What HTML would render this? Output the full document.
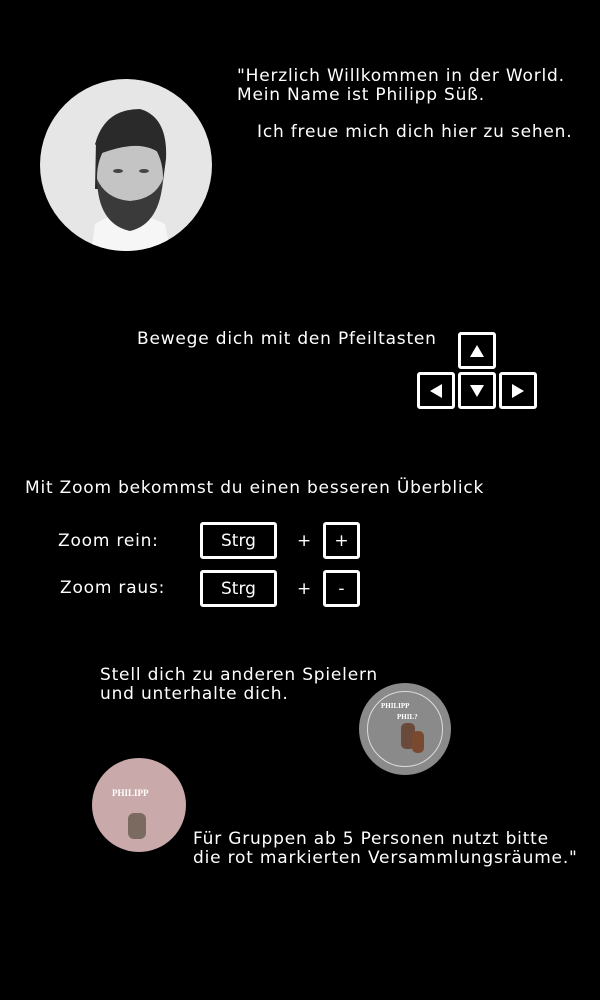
<!DOCTYPE html>
<html><head><meta charset="utf-8"><style>
body{margin:0;width:600px;height:1000px;background:#000;position:relative;overflow:hidden;font-family:"DejaVu Sans","Liberation Sans",sans-serif;color:#fff;font-size:17px;letter-spacing:0.8px}
.t{position:absolute;white-space:nowrap;line-height:19px}
.k{position:absolute;border:3.5px solid #fff;border-radius:3px;box-sizing:border-box;display:flex;align-items:center;justify-content:center;color:#fff;letter-spacing:0}
.c{position:absolute;border-radius:50%;letter-spacing:0}
</style></head><body>
<div class="c" style="left:40px;top:79px;width:172px;height:172px;background:#e6e6e6;overflow:hidden">
<svg width="172" height="172" viewBox="0 0 172 172">
<path d="M45 220 L55 145 Q86 125 125 145 L140 220Z" fill="#f6f6f6"/>
<path d="M56 62 Q66 30 100 30 Q128 38 126 80 L122 110 L55 110 Z" fill="#2a2a2a"/>
<ellipse cx="90" cy="98" rx="33" ry="44" fill="#c4c4c4"/>
<path d="M57 100 Q58 145 90 152 Q120 145 123 100 Q115 120 90 122 Q66 120 57 100Z" fill="#3a3a3a"/>
<path d="M55 65 Q68 32 102 36 Q128 46 124 78 Q105 58 62 74Z" fill="#2a2a2a"/>
<ellipse cx="78" cy="92" rx="5" ry="2" fill="#444"/><ellipse cx="104" cy="92" rx="5" ry="2" fill="#444"/>
</svg></div>
<div class="t" style="left:237px;top:67px">"Herzlich Willkommen in der World.<br>Mein Name ist Philipp Süß.</div>
<div class="t" style="left:257px;top:123px">Ich freue mich dich hier zu sehen.</div>
<div class="t" style="left:137px;top:330px">Bewege dich mit den Pfeiltasten</div>
<div class="k" style="left:458px;top:332px;width:38px;height:37px"><svg width="14" height="12"><path d="M7 0L14 12H0Z" fill="#fff"/></svg></div>
<div class="k" style="left:417px;top:372px;width:38px;height:37px"><svg width="12" height="14"><path d="M0 7L12 0V14Z" fill="#fff"/></svg></div>
<div class="k" style="left:458px;top:372px;width:38px;height:37px"><svg width="14" height="12"><path d="M7 12L14 0H0Z" fill="#fff"/></svg></div>
<div class="k" style="left:499px;top:372px;width:38px;height:37px"><svg width="12" height="14"><path d="M12 7L0 0V14Z" fill="#fff"/></svg></div>
<div class="t" style="left:25px;top:479px">Mit Zoom bekommst du einen besseren Überblick</div>
<div class="t" style="left:58px;top:532px">Zoom rein:</div>
<div class="k" style="left:200px;top:522px;width:77px;height:37px">Strg</div>
<div class="t" style="left:297px;top:532px">+</div>
<div class="k" style="left:323px;top:522px;width:37px;height:37px">+</div>
<div class="t" style="left:60px;top:579px">Zoom raus:</div>
<div class="k" style="left:200px;top:570px;width:77px;height:37px">Strg</div>
<div class="t" style="left:297px;top:580px">+</div>
<div class="k" style="left:323px;top:570px;width:37px;height:37px">-</div>
<div class="t" style="left:100px;top:666px">Stell dich zu anderen Spielern<br>und unterhalte dich.</div>
<div class="c" style="left:359px;top:683px;width:92px;height:92px;background:#8a8a8a">
<div class="c" style="left:8px;top:8px;width:74px;height:74px;border:1px solid #ddd"></div>
<div style="position:absolute;left:22px;top:19px;font:bold 7px 'Liberation Serif',serif;color:#fff">PHILIPP</div>
<div style="position:absolute;left:38px;top:30px;font:bold 7px 'Liberation Serif',serif;color:#fff">PHIL?</div>
<div style="position:absolute;left:42px;top:40px;width:14px;height:26px;background:#6a4a3a;border-radius:5px"></div>
<div style="position:absolute;left:53px;top:48px;width:12px;height:22px;background:#7a4a30;border-radius:5px"></div>
</div>
<div class="c" style="left:92px;top:758px;width:94px;height:94px;background:#c9a9a9">
<div style="position:absolute;left:20px;top:30px;font:bold 9px 'Liberation Serif',serif;color:#fff">PHILIPP</div>
<div style="position:absolute;left:36px;top:55px;width:18px;height:26px;background:#7a6a60;border-radius:6px"></div>
</div>
<div class="t" style="left:193px;top:830px">Für Gruppen ab 5 Personen nutzt bitte<br>die rot markierten Versammlungsräume."</div>
</body></html>
